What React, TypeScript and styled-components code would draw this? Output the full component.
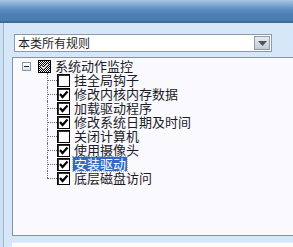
import React from 'react';
import styled, { createGlobalStyle } from 'styled-components';

const GlobalStyle = createGlobalStyle`
  html, body {
    margin: 0;
    padding: 0;
    background: #d5e7f8;
  }
  body {
    font-family: "Noto Sans CJK SC", "Liberation Sans", sans-serif;
  }
`;

type Item = { label: string; checked: boolean; selected?: boolean };

const items: Item[] = [
  { label: '挂全局钩子', checked: false },
  { label: '修改内核内存数据', checked: true },
  { label: '加载驱动程序', checked: true },
  { label: '修改系统日期及时间', checked: true },
  { label: '关闭计算机', checked: false },
  { label: '使用摄像头', checked: true },
  { label: '安装驱动', checked: true, selected: true },
  { label: '底层磁盘访问', checked: true },
];

const App = () => {
  return (
    <StyledWrapper>
      <GlobalStyle />
      <Header />
      <Body>
        <LeftStrip />
        <Main>
          <Select>
            <span>本类所有规则</span>
            <DropButton>
              <svg width="9" height="5" viewBox="0 0 9 5">
                <polygon points="0,0 9,0 4.5,5" fill="#4b5262" />
              </svg>
            </DropButton>
          </Select>
          <Panel>
            <Row>
              <Expander>
                <i />
              </Expander>
              <MixedBox>
                <svg width="11" height="11" viewBox="0 0 11 11">
                  <polyline points="2,5 4.5,7.5 9,3" fill="none" stroke="#000" strokeWidth="3" />
                  <polyline points="2,5 4.5,7.5 9,3" fill="none" stroke="#fff" strokeWidth="1.6" />
                </svg>
              </MixedBox>
              <Label>系统动作监控</Label>
            </Row>
            <Children>
              {items.map((it, i) => (
                <Row key={it.label}>
                  <Connector $last={i === items.length - 1} />
                  <CheckBox>
                    {it.checked && (
                      <svg width="11" height="11" viewBox="0 0 11 11">
                        <polyline points="2,5 4.5,8 9.5,2.5" fill="none" stroke="#000" strokeWidth="2.2" />
                      </svg>
                    )}
                  </CheckBox>
                  <Label $selected={it.selected}>{it.label}</Label>
                </Row>
              ))}
            </Children>
          </Panel>
          <LowerPanel />
        </Main>
      </Body>
    </StyledWrapper>
  );
};

export default App;

const StyledWrapper = styled.div`
  width: 293px;
  height: 247px;
  overflow: hidden;
  display: flex;
  flex-direction: column;
  background: #d5e7f8;
`;

const Header = styled.div`
  height: 21px;
  flex-shrink: 0;
  background: linear-gradient(
    #a9c6e1 0px,
    #86aed4 4px,
    #5d8fc0 9px,
    #4d81b4 14px,
    #4a7db0 20px
  );
  border-bottom: 2px solid #3e6c99;
`;

const Body = styled.div`
  flex: 1;
  display: flex;
  min-height: 0;
`;

const LeftStrip = styled.div`
  width: 3px;
  flex-shrink: 0;
  background: #cde2f5;
  border-right: 1px solid #9fb6cb;
`;

const Main = styled.div`
  flex: 1;
  display: flex;
  flex-direction: column;
  padding: 11px 0 0 8px;
  min-width: 0;
`;

const Select = styled.div`
  margin-left: 2px;
  width: 258px;
  height: 18px;
  box-sizing: border-box;
  border: 1px solid #8d99a6;
  background: #fff;
  display: flex;
  align-items: center;
  justify-content: space-between;
  padding: 0 1px 0 3px;
  font-size: 12px;
  line-height: 16px;
  color: #1e1e28;
`;

const DropButton = styled.div`
  width: 16px;
  height: 14px;
  box-sizing: border-box;
  border: 1px solid #8f9bab;
  background: linear-gradient(#e8ebf0, #c4cad4);
  display: flex;
  align-items: center;
  justify-content: center;
`;

const Panel = styled.div`
  margin-top: 5px;
  height: 179px;
  box-sizing: border-box;
  flex-shrink: 0;
  border: 1px solid #87949f;
  border-right: none;
  background: #f9f9fe;
  padding: 1px 0 0 9px;
`;

const Children = styled.div`
  margin-left: 25px;
`;

const Row = styled.div`
  display: flex;
  align-items: center;
  height: 14px;
`;

const Expander = styled.div`
  width: 9px;
  height: 9px;
  box-sizing: border-box;
  border: 1px solid #8a9aab;
  background: linear-gradient(#ffffff, #dcdfe6);
  display: flex;
  align-items: center;
  justify-content: center;
  margin-right: 7px;
  i {
    width: 5px;
    height: 1px;
    background: #1c2a4c;
  }
`;

const MixedBox = styled.div`
  width: 13px;
  height: 13px;
  box-sizing: border-box;
  border: 1px solid #000;
  background: repeating-conic-gradient(#000 0 25%, #fff 0 50%) 0 0 / 2px 2px;
  display: flex;
  align-items: center;
  justify-content: center;
`;

const CheckBox = styled.div`
  width: 13px;
  height: 13px;
  box-sizing: border-box;
  border: 1px solid #000;
  box-shadow: inset 1px 1px 0 #333;
  background: #fff;
  display: flex;
  align-items: center;
  justify-content: center;
`;

const Connector = styled.div<{ $last?: boolean }>`
  position: relative;
  width: 10px;
  align-self: stretch;
  &::before {
    content: '';
    position: absolute;
    left: 0;
    top: 0;
    bottom: ${(p) => (p.$last ? '7px' : '0')};
    border-left: 1px dotted #6d6d6d;
  }
  &::after {
    content: '';
    position: absolute;
    left: 0;
    right: 0;
    top: 7px;
    border-top: 1px dotted #6d6d6d;
  }
`;

const Label = styled.span<{ $selected?: boolean }>`
  display: inline-block;
  margin-left: 3px;
  padding: 0 1px;
  height: 14px;
  box-sizing: border-box;
  font-size: 13px;
  line-height: 14px;
  white-space: nowrap;
  color: ${(p) => (p.$selected ? '#fff' : '#1b1b26')};
  background: ${(p) => (p.$selected ? '#3467c2' : 'transparent')};
  outline: ${(p) => (p.$selected ? '1px dotted #9ab0e0' : 'none')};
`;

const LowerPanel = styled.div`
  margin-top: 6px;
  height: 20px;
  flex-shrink: 0;
  border-top: 1px solid #e4eef8;
  background: #fbfbf7;
`;
